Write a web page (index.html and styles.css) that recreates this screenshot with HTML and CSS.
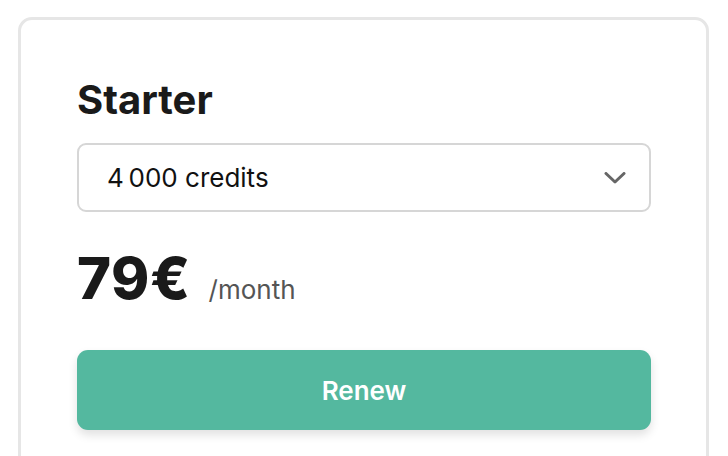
FILE: index.html
```html
<!DOCTYPE html>
<html lang="en">
<head>
<meta charset="utf-8">
<title>Starter plan</title>
<link rel="stylesheet" href="styles.css">
</head>
<body>
  <div class="card">
    <h2 class="plan-title">Starter</h2>
    <div class="select">
      <span class="select-value">4&#8239;000 credits</span>
      <svg class="chevron" width="22" height="12" viewBox="0 0 22 12" aria-hidden="true">
        <path d="M2 1.5 L11 10 L20 1.5" fill="none" stroke="#666" stroke-width="3" stroke-linecap="round" stroke-linejoin="round"/>
      </svg>
    </div>
    <div class="price-row">
      <span class="price">79€</span>
      <span class="period">/month</span>
    </div>
    <button class="renew">Renew</button>
  </div>
</body>
</html>
```
FILE: styles.css
```css
html, body {
  margin: 0;
  padding: 0;
  background: #ffffff;
  overflow: hidden;
  font-family: Inter, "Noto Sans", "Liberation Sans", sans-serif;
}

.card {
  margin: 17px 0 0 18px;
  box-sizing: content-box;
  width: 574px;
  padding: 56px 55px 56px 56px;
  border: 3px solid #e6e6e6;
  border-radius: 14px;
  display: flex;
  flex-direction: column;
}

.plan-title {
  margin: 0 0 19px 0;
  font-size: 40px;
  line-height: 48px;
  font-weight: 700;
  color: #1a1a1a;
}

.select {
  box-sizing: border-box;
  height: 69px;
  border: 2px solid #d6d6d6;
  border-radius: 9px;
  display: flex;
  align-items: center;
  justify-content: space-between;
  padding: 0 23px 0 28px;
}

.select-value {
  font-size: 26px;
  color: #111111;
}

.chevron {
  display: block;
}

.price-row {
  margin-top: 37px;
  display: flex;
  align-items: baseline;
  gap: 18px;
}

.price {
  font-size: 58px;
  line-height: 1;
  font-weight: 800;
  color: #1a1a1a;
  letter-spacing: 0.5px;
}

.period {
  font-size: 26px;
  line-height: 1;
  color: #555555;
}

.renew {
  margin-top: 43px;
  height: 80px;
  border: none;
  border-radius: 11px;
  background: #54b89f;
  color: #ffffff;
  font-family: Inter, "Noto Sans", "Liberation Sans", sans-serif;
  font-size: 26px;
  font-weight: 600;
  box-shadow: 0 5px 10px rgba(0, 0, 0, 0.12);
}
```
